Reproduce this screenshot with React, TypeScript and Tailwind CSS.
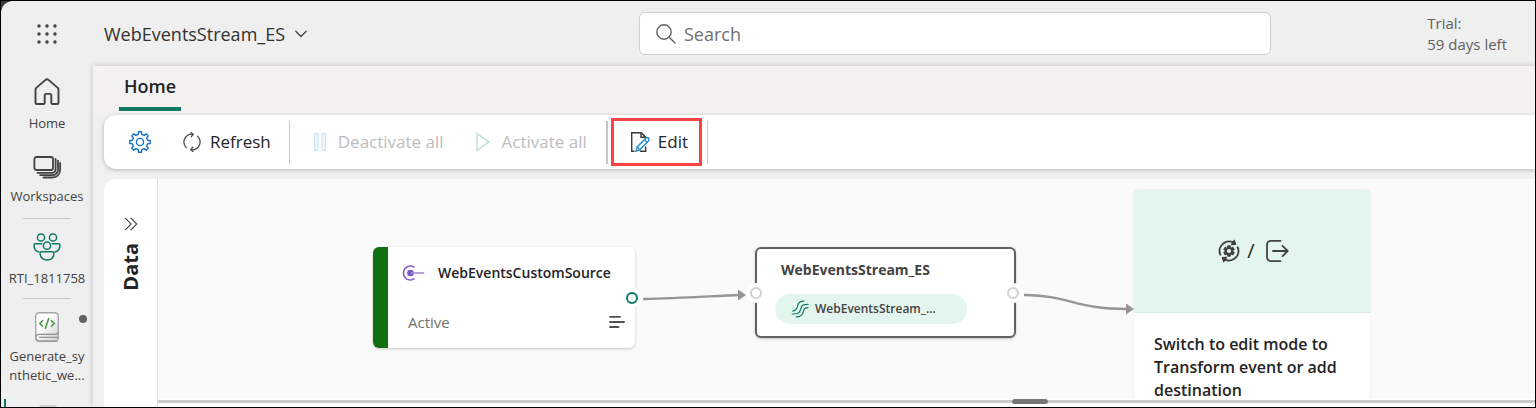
import type { ReactNode } from "react";

function gearPath(c: number, outer: number, inner: number, teeth: number) {
  const points: string[] = [];
  const step = (Math.PI * 2) / teeth;
  const at = (r: number, a: number) =>
    `${(c + r * Math.sin(a)).toFixed(2)} ${(c - r * Math.cos(a)).toFixed(2)}`;
  for (let i = 0; i < teeth; i++) {
    const a = i * step;
    points.push(
      at(inner, a - step * 0.27),
      at(outer, a - step * 0.19),
      at(outer, a + step * 0.19),
      at(inner, a + step * 0.27),
    );
  }
  return `M${points.join("L")}Z`;
}

function WaffleIcon() {
  const stops = [2, 10, 18];
  return (
    <svg className="size-5" viewBox="0 0 20 20" fill="#424242" aria-hidden="true">
      {stops.flatMap((y) => stops.map((x) => <circle key={`${x}-${y}`} cx={x} cy={y} r="1.7" />))}
    </svg>
  );
}

function ChevronDownIcon() {
  return (
    <svg className="h-2 w-3" viewBox="0 0 12 8" fill="none" stroke="#424242" strokeWidth="1.3" strokeLinecap="round" strokeLinejoin="round" aria-hidden="true">
      <path d="M.8 1.2 6 6.5l5.2-5.3" />
    </svg>
  );
}

function SearchIcon() {
  return (
    <svg className="size-5 shrink-0" viewBox="0 0 20 20" fill="none" stroke="#616161" strokeWidth="1.4" strokeLinecap="round" aria-hidden="true">
      <circle cx="8" cy="8" r="7.2" />
      <path d="m13.200 13.200 5.800 5.800" />
    </svg>
  );
}

function HomeIcon() {
  return (
    <svg className="size-7" viewBox="0 0 28 28" fill="none" stroke="#424242" strokeWidth="1.9" strokeLinejoin="round" aria-hidden="true">
      <path d="M2.500 11.800c0-.9.3-1.600 1-2.200l9-7.700c.9-.8 2.100-.8 3 0l9 7.700c.7.600 1 1.300 1 2.200v12.900c0 .8-.5 1.300-1.300 1.300h-4.600c-.8 0-1.300-.5-1.300-1.300v-7c0-1.200-.6-1.800-1.800-1.800h-3c-1.200 0-1.800.6-1.800 1.800v7c0 .8-.5 1.300-1.300 1.300H3.800c-.8 0-1.300-.5-1.300-1.300Z" />
    </svg>
  );
}

function WorkspacesIcon() {
  return (
    <svg className="h-6 w-7" viewBox="0 0 28 24" fill="none" stroke="#424242" strokeWidth="1.8" strokeLinecap="round" aria-hidden="true">
      <rect x="1.400" y="2" width="18.600" height="13" rx="2" />
      <path d="M22.600 3.800v10.200c0 2.400-1.400 3.800-3.800 3.800H4.500" />
      <path d="M25 5.600v8.600c0 4-2.200 6-6 6H7.200" />
      <path d="M27.100 8v6.500c0 5-3.100 8-8 8H10.500" />
    </svg>
  );
}

function PeopleIcon() {
  return (
    <svg className="size-7" viewBox="0 0 28 28" fill="none" stroke="#117865" strokeWidth="1.500" strokeLinecap="round" strokeLinejoin="round" aria-hidden="true">
      <circle cx="8" cy="4.500" r="3.600" />
      <circle cx="20" cy="4.500" r="3.600" />
      <circle cx="14" cy="12.700" r="3.600" />
      <path d="M8.700 10.800H2.200c-.7 0-1.200.5-1.200 1.200 0 3.600 1.500 6.200 4.800 7" />
      <path d="M19.300 10.800h6.500c.7 0 1.200.5 1.200 1.200 0 3.600-1.500 6.200-4.800 7" />
      <path d="M8.300 18.800h11.400c.7 0 1.200.5 1.200 1.200 0 4.300-2.700 7-6.900 7s-6.900-2.700-6.900-7c0-.7.5-1.200 1.200-1.200Z" />
    </svg>
  );
}

function NotebookIcon() {
  return (
    <svg className="h-8 w-6" viewBox="0 0 24 32" fill="none" aria-hidden="true">
      <defs>
        <linearGradient id="cover" x1="0" y1="0" x2="1" y2="1">
          <stop offset="0.4" stopColor="#fdfdfd" />
          <stop offset="1" stopColor="#cfcfcf" />
        </linearGradient>
      </defs>
      <rect x="0.700" y="1.700" width="22.600" height="28.600" rx="3.500" fill="url(#cover)" stroke="#a6a6a6" strokeWidth="1.400" />
      <path d="M.7 26c.3-1.800 1.500-2.700 3.300-2.700h16c1.800 0 3.300-.8 3.300-2.300" stroke="#8f8f8f" strokeWidth="1.200" />
      <path d="M4 26.300h19.300" stroke="#8f8f8f" strokeWidth="1.200" />
      <path d="M.9 26.800c.4 2.300 1.600 3.400 3.600 3.400h18" stroke="#9b9b9b" strokeWidth="1.500" />
      <path d="M8 9.200 4.800 12.500 8 15.800m8-6.600 3.200 3.300L16 15.800M13.800 7l-3.600 11" stroke="#42923f" strokeWidth="1.500" />
    </svg>
  );
}

function GearIcon() {
  return (
    <svg className="size-6" viewBox="0 0 24 24" fill="none" stroke="#1271c4" strokeWidth="1.400" strokeLinejoin="round" aria-hidden="true">
      <path d={gearPath(12, 10.300, 7.900, 8)} />
      <circle cx="12" cy="12" r="3.600" />
    </svg>
  );
}

function RefreshIcon() {
  return (
    <svg className="size-5" viewBox="0 0 20 20" fill="none" stroke="#424242" strokeWidth="1.200" aria-hidden="true">
      <path d="M3.300 14.400A7.900 7.900 0 0 1 10.800 2.200M16.700 5.600A7.900 7.900 0 0 1 9.200 17.800" />
      <path d="M3.300 14.400a7.900 7.900 0 0 0 1.600 1.700M16.700 5.600a7.900 7.900 0 0 0-1.600-1.700" />
      <path d="m8.600.2 2.600 2.100-2.200 2.700M11.400 19.800l-2.600-2.100 2.200-2.700" />
    </svg>
  );
}

function PauseIcon() {
  return (
    <svg className="h-5 w-3" viewBox="0 0 12 20" fill="#eef6fc" stroke="#c9e2f5" aria-hidden="true">
      <path d="M.5 1.500h3.500v17H.5zM8 1.500h3.500v17H8z" />
    </svg>
  );
}

function PlayIcon() {
  return (
    <svg className="h-5 w-3.5" viewBox="0 0 14 20" fill="none" stroke="#b5dfc4" strokeWidth="1.300" aria-hidden="true">
      <path d="M1 1.500 12.800 10 1 18.500Z" />
    </svg>
  );
}

function EditIcon() {
  return (
    <svg className="size-5" viewBox="0 0 20 20" fill="none" aria-hidden="true">
      <path d="M4.500 19.300H1.700V.7h9.500l4.200 4.200v1.300M11 .9v4.300h4.300M15.700 14.500v4.800H10" fill="#fafafa" stroke="#3b3a39" strokeWidth="1.400" />
      <path d="m6 19.200 1.200-4.300 8.700-8.600c.9-.9 2-.7 2.600-.1.700.7.800 1.800-.1 2.700l-8.600 8.900Z" fill="#fff" stroke="#1e8bcd" strokeWidth="1.400" />
      <path d="m7.200 14.900 2.600 2.900M14.400 7.600l2.700 2.800" stroke="#1e8bcd" strokeWidth="1.200" />
    </svg>
  );
}

function DoubleChevronIcon() {
  return (
    <svg className="size-3.5" viewBox="0 0 14 14" fill="none" stroke="#424242" strokeWidth="1.100" aria-hidden="true">
      <path d="m1 .8 6.200 6.200L1 13.200M6.600.8 12.800 7l-6.200 6.200" />
    </svg>
  );
}

function SourceIcon() {
  return (
    <svg className="h-4 w-6" viewBox="0 0 24 16" fill="none" stroke="#8661c5" strokeWidth="1.600" aria-hidden="true">
      <path d="M12.500 2.300A7 7 0 1 0 12.500 13.700" />
      <circle cx="8.500" cy="8" r="3.300" fill="#7a55bd" stroke="none" />
      <path d="M8.500 8h13.700" stroke="#a58bd6" />
    </svg>
  );
}

function LinesIcon() {
  return (
    <svg className="size-4" viewBox="0 0 16 16" fill="none" stroke="#505050" strokeWidth="1.800" strokeLinecap="round" aria-hidden="true">
      <path d="M1 2.800h10M1 8h14M1 13h8.500" />
    </svg>
  );
}

function StreamIcon() {
  return (
    <svg className="size-4.5" viewBox="0 0 18 18" fill="none" stroke="#117865" strokeWidth="1.200" strokeLinecap="round" aria-hidden="true">
      <path d="M12.800 1.200c-4 0-5.500 1.400-6.200 4.700C5.900 9.200 4.900 10.800 1.400 11" />
      <path d="M17 4.400c-5.200 0-6.400.9-7.300 4.800-.8 3.600-2.600 4.800-8.500 4.800" />
      <path d="M17 7.700c-3.200.1-4 1-4.700 4.200-.8 3.500-2.700 5-7 5" />
    </svg>
  );
}

function TransformIcon() {
  return (
    <svg className="size-6" viewBox="0 0 24 24" fill="none" stroke="#424242" strokeWidth="2" strokeLinejoin="round" aria-hidden="true">
      <path d={gearPath(12, 4.900, 3, 6)} />
      <path d="M3.300 15.600A9.400 9.400 0 0 1 17.800 4.600M20.700 8.400A9.400 9.400 0 0 1 6.200 19.400" strokeLinecap="round" />
      <path d="M17.300 1.200l1.400 4.200-4.200.2ZM6.700 22.800l-1.400-4.200 4.200-.2Z" fill="#424242" strokeWidth="1.200" />
    </svg>
  );
}

function ExportIcon() {
  return (
    <svg className="size-6" viewBox="0 0 24 24" fill="none" stroke="#424242" strokeWidth="1.800" strokeLinecap="round" strokeLinejoin="round" aria-hidden="true">
      <path d="M15.500 1.900H6C3.600 1.900 2 3.500 2 5.900v12.200c0 2.400 1.600 4 4 4h9.500" />
      <path d="M8 12h14.500M17.500 6.800l5.200 5.200-5.200 5.200" />
    </svg>
  );
}

function RailLink({ icon, label, compact = false }: { icon: ReactNode; label: string; compact?: boolean }) {
  return (
    <a href="#" className={`flex w-full flex-col items-center text-[13px] leading-[19px] text-[#424242] ${compact ? "gap-1" : "gap-2"}`}>
      {icon}
      <span className="w-20 text-center break-all">{label}</span>
    </a>
  );
}

function Rail() {
  return (
    <nav aria-label="Main" className="flex w-[92px] shrink-0 flex-col items-center pt-3">
      <RailLink icon={<HomeIcon />} label="Home" />
      <div className="mt-[22px] w-full">
        <RailLink icon={<WorkspacesIcon />} label="Workspaces" />
      </div>
      <hr className="mt-3 w-12 border-[#c9c9c9]" />
      <div className="mt-3.5 w-full">
        <RailLink icon={<PeopleIcon />} label="RTI_1811758" />
      </div>
      <hr className="mt-2.5 w-12 border-[#c9c9c9]" />
      <div className="relative mt-3 w-full">
        <RailLink icon={<NotebookIcon />} label="Generate_synthetic_we..." compact />
        <span className="absolute top-1 right-1.5 size-2 rounded-full bg-[#616161]" />
      </div>
      <div className="mt-3.5 flex h-10 w-full shrink-0 items-start pl-[3px]">
        <span className="h-10 w-0.5 bg-[#117865]" />
        <span className="mt-1.5 ml-8 h-6 w-5 rounded bg-[#d0d0d0]" />
      </div>
    </nav>
  );
}

function Port({ className }: { className: string }) {
  return (
    <span className={`absolute flex size-5 items-center justify-center rounded-full bg-white ${className}`}>
      <span className="size-3 rounded-full border-2 border-current bg-white" />
    </span>
  );
}

function Canvas() {
  return (
    <div className="relative min-h-0 flex-1 overflow-hidden bg-[#fafafa]">
      <svg className="absolute top-0 left-0 h-[222px] w-[1000px]" viewBox="0 0 1000 222" fill="none" stroke="#979593" strokeWidth="2.400" aria-hidden="true">
        <path d="M485 120C525 119 555 117 582 116" />
        <path d="M866 116C915 117 915 130 970 130" />
        <path d="M580 110.500v11l8-5.500ZM968 124.500v11l8-5.500Z" fill="#979593" stroke="none" />
      </svg>

      <article className="absolute top-[68px] left-[215px] flex h-[101px] w-[262px] rounded-md bg-white shadow-[0_1px_3px_rgba(0,0,0,0.2)]">
        <span className="w-[15px] shrink-0 rounded-l-md bg-[#107010]" />
        <div className="flex flex-1 flex-col justify-between pt-4 pr-2.5 pb-4 pl-3.5">
          <div className="flex items-center gap-3 whitespace-nowrap">
            <SourceIcon />
            <h3 className="text-[14px] leading-5 font-semibold text-[#242424]">WebEventsCustomSource</h3>
          </div>
          <div className="flex items-center justify-between pl-1.5">
            <span className="text-[15px] leading-5 text-[#707070]">Active</span>
            <button type="button" aria-label="Details"><LinesIcon /></button>
          </div>
        </div>
        <Port className="top-[41px] -right-[7px] text-[#117865]" />
      </article>

      <article className="absolute top-[68px] left-[597px] h-[91px] w-[261px] rounded-md border-2 border-[#616161] bg-white pt-[11px] pl-[18px] shadow-[0_1px_3px_rgba(0,0,0,0.2)]">
        <h3 className="pl-1.5 text-[14px] leading-5 font-bold text-[#424242]">WebEventsStream_ES</h3>
        <div className="mt-3.5 flex h-[30px] w-48 items-center gap-1.5 rounded-full bg-[#e3f6ee] pl-4 text-[12px] font-semibold text-[#424242]">
          <StreamIcon />
          <span>WebEventsStream_...</span>
        </div>
        <Port className="top-[34px] -left-[11px] text-[#d1d1d1]" />
        <Port className="top-[34px] -right-[9px] text-[#d1d1d1]" />
      </article>

      <article className="absolute top-[11px] left-[976px] w-[236px] overflow-hidden rounded bg-white shadow-[0_0_2px_rgba(0,0,0,0.12)]">
        <div className="flex h-[123px] items-center justify-center gap-1.5 border-b border-[#d9ece4] bg-[#e3f6ee] pl-0.5">
          <TransformIcon />
          <span className="text-[20px] leading-6 text-[#242424]">/</span>
          <span className="pl-1"><ExportIcon /></span>
        </div>
        <p className="px-5 pt-5 pb-10 text-[16px] leading-[23px] font-semibold text-[#242424]">
          Switch to edit mode to Transform event or add destination
        </p>
      </article>
    </div>
  );
}

export default function App() {
  return (
    <div className="h-screen overflow-hidden border border-black bg-[#3b3b3b] font-['Open_Sans','Noto_Sans',sans-serif]">
      <div className="flex h-full flex-col rounded-tl-xl bg-[#efefef]">
        <header className="flex h-[65px] shrink-0 items-center">
          <div className="flex flex-1 items-center">
            <button type="button" aria-label="Apps" className="flex w-[91px] justify-center"><WaffleIcon /></button>
            <button type="button" className="ml-3 flex items-center gap-2.5 text-[18px] leading-6 text-[#323130]">
              WebEventsStream_ES
              <ChevronDownIcon />
            </button>
          </div>
          <label className="flex h-[43px] w-[632px] items-center gap-2 rounded-md border border-[#d1d1d1] bg-white px-4">
            <SearchIcon />
            <input type="search" aria-label="Search" placeholder="Search" className="min-w-0 flex-1 text-[18px] leading-6 outline-none placeholder:text-[#707070]" />
          </label>
          <div className="flex w-[264px] justify-end pr-7">
            <p className="text-[15px] leading-[21px] text-[#616161]">Trial:<br />59 days left</p>
          </div>
        </header>

        <div className="flex min-h-0 flex-1">
          <Rail />
          <main className="flex min-w-0 flex-1 flex-col bg-[#f0f0f0] shadow-[0_0_6px_rgba(0,0,0,0.2)]">
            <div role="tablist" className="flex h-[49px] shrink-0 items-start bg-[#f3f2f1] pl-[26px]">
              <button type="button" role="tab" aria-selected="true" className="h-[45px] border-b-4 border-[#117865] px-[5px] pb-0.5 text-[18px] leading-6 font-semibold text-[#242424]">
                Home
              </button>
            </div>

            <div role="toolbar" aria-label="Stream actions" className="ml-[11px] flex h-[54px] shrink-0 items-center rounded-l-xl bg-white pl-6 text-[17px] leading-6 whitespace-nowrap text-[#242424] shadow-[0_1px_4px_rgba(0,0,0,0.25)]">
              <button type="button" aria-label="Settings"><GearIcon /></button>
              <button type="button" className="ml-[30px] flex items-center gap-2"><RefreshIcon />Refresh</button>
              <span className="ml-4.5 h-[43px] w-px bg-[#c8c6c4]" />
              <button type="button" disabled className="ml-6 flex items-center gap-3 text-[#bdbdbd]"><PauseIcon />Deactivate all</button>
              <button type="button" disabled className="ml-8 flex items-center gap-3 text-[#bdbdbd]"><PlayIcon />Activate all</button>
              <span className="ml-[19px] h-[43px] w-0.5 bg-[#c8c6c4]" />
              <button type="button" className="ml-[3px] flex h-12 w-[91px] items-center gap-2 border-3 border-[#fa4343] pl-4"><EditIcon />Edit</button>
              <span className="ml-[5px] h-[43px] w-px bg-[#c8c6c4]" />
            </div>

            <div className="mt-2.5 ml-[11px] flex min-h-0 flex-1 overflow-hidden rounded-tl-xl bg-white">
              <aside className="flex w-[54px] shrink-0 flex-col items-center gap-3 border-r border-[#dedede] pt-[38px]">
                <button type="button" aria-label="Expand data panel"><DoubleChevronIcon /></button>
                <h2 className="rotate-180 text-[20px] leading-6 font-bold text-[#242424] [writing-mode:vertical-rl]">Data</h2>
              </aside>
              <section aria-label="Stream diagram" className="flex min-w-0 flex-1 flex-col pb-[3px]">
                <Canvas />
                <div className="flex h-[5px] shrink-0 items-center">
                  <span className="h-[3px] w-[62%] bg-[#cbcbcb]" />
                  <span className="h-[5px] w-9 rounded-full bg-[#767676]" />
                  <span className="h-[3px] flex-1 bg-[#cbcbcb]" />
                </div>
              </section>
            </div>
          </main>
        </div>
      </div>
    </div>
  );
}
